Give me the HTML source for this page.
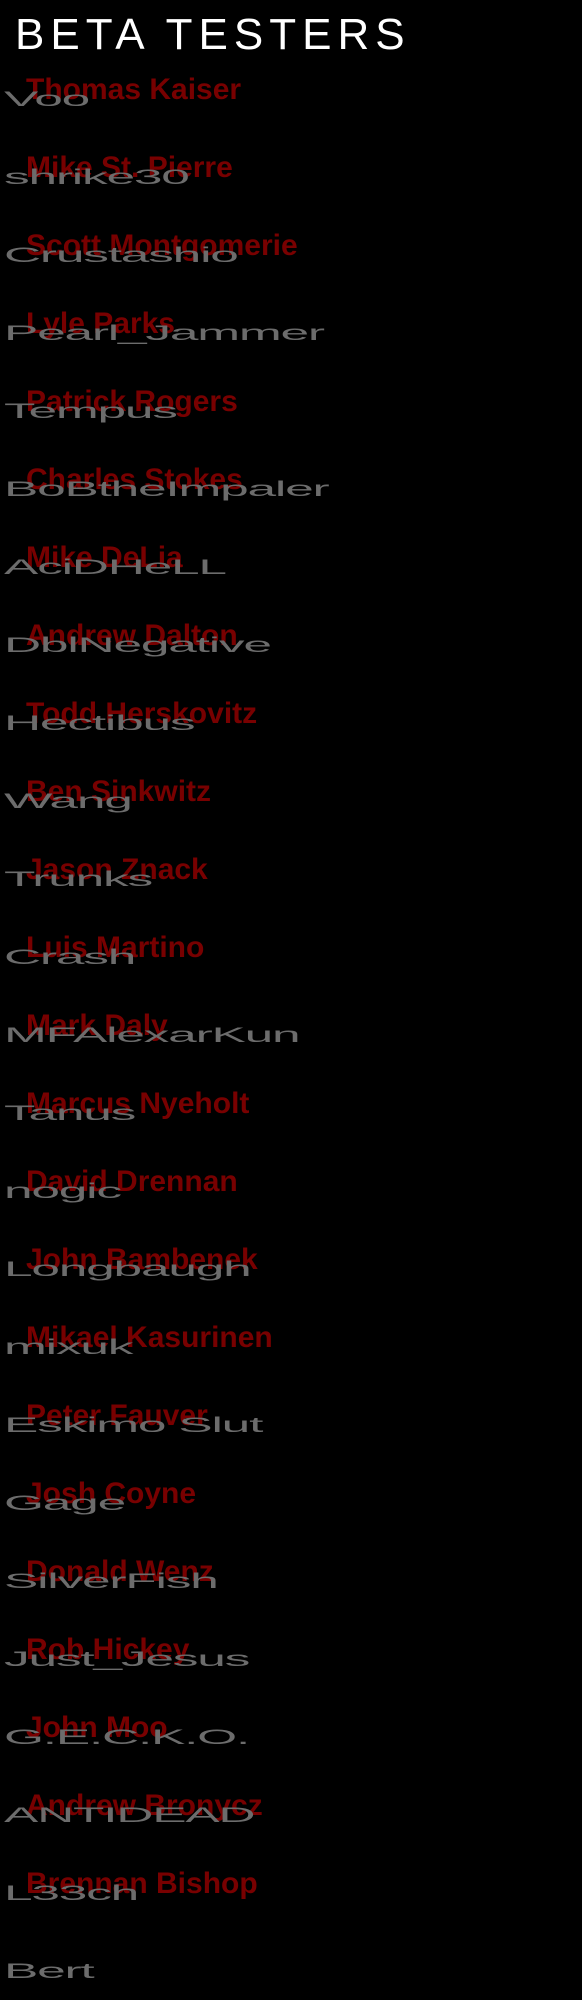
<!DOCTYPE html>
<html><head><meta charset="utf-8"><style>
html,body{margin:0;padding:0;background:#000;width:582px;height:2000px;overflow:hidden;position:relative}
.t{position:absolute;left:15px;top:13px;font:44px/44px "Liberation Sans",sans-serif;color:#fff;letter-spacing:6px;white-space:nowrap}
.r{position:absolute;left:26px;font:bold 30px/30px "Liberation Sans",sans-serif;color:#780000;white-space:nowrap;margin-top:0px}
.g{position:absolute;left:4px;font:21px/21px "Liberation Sans",sans-serif;color:#6c6c6c;white-space:nowrap;transform:scaleX(2.45);transform-origin:0 0;letter-spacing:-0.5px}
</style></head><body>
<div class="t">BETA TESTERS</div>
<div class="r" style="top:75px">Thomas Kaiser</div><div class="g" style="top:89px">Voo</div>
<div class="r" style="top:153px">Mike St. Pierre</div><div class="g" style="top:167px">shrike30</div>
<div class="r" style="top:231px">Scott Montgomerie</div><div class="g" style="top:245px">Crustashio</div>
<div class="r" style="top:309px">Lyle Parks</div><div class="g" style="top:323px">Pearl_Jammer</div>
<div class="r" style="top:387px">Patrick Rogers</div><div class="g" style="top:401px">Tempus</div>
<div class="r" style="top:465px">Charles Stokes</div><div class="g" style="top:479px">BoBtheImpaler</div>
<div class="r" style="top:543px">Mike DeLia</div><div class="g" style="top:557px">AciDHeLL</div>
<div class="r" style="top:621px">Andrew Dalton</div><div class="g" style="top:635px">DblNegative</div>
<div class="r" style="top:699px">Todd Herskovitz</div><div class="g" style="top:713px">Hectibus</div>
<div class="r" style="top:777px">Ben Sinkwitz</div><div class="g" style="top:791px">Wang</div>
<div class="r" style="top:855px">Jason Znack</div><div class="g" style="top:869px">Trunks</div>
<div class="r" style="top:933px">Luis Martino</div><div class="g" style="top:947px">Crash</div>
<div class="r" style="top:1011px">Mark Daly</div><div class="g" style="top:1025px">MFAlexarKun</div>
<div class="r" style="top:1089px">Marcus Nyeholt</div><div class="g" style="top:1103px">Tanus</div>
<div class="r" style="top:1167px">David Drennan</div><div class="g" style="top:1181px">nogic</div>
<div class="r" style="top:1245px">John Bambenek</div><div class="g" style="top:1259px">Longbaugh</div>
<div class="r" style="top:1323px">Mikael Kasurinen</div><div class="g" style="top:1337px">mixuk</div>
<div class="r" style="top:1401px">Peter Fauver</div><div class="g" style="top:1415px">Eskimo Slut</div>
<div class="r" style="top:1479px">Josh Coyne</div><div class="g" style="top:1493px">Gage</div>
<div class="r" style="top:1557px">Donald Wenz</div><div class="g" style="top:1571px">SilverFish</div>
<div class="r" style="top:1635px">Rob Hickey</div><div class="g" style="top:1649px">Just_Jesus</div>
<div class="r" style="top:1713px">John Moo</div><div class="g" style="top:1727px">G.E.C.K.O.</div>
<div class="r" style="top:1791px">Andrew Bronycz</div><div class="g" style="top:1805px">ANTIDEAD</div>
<div class="r" style="top:1869px">Brennan Bishop</div><div class="g" style="top:1883px">L33ch</div>
<div class="g" style="top:1961px">Bert</div>
</body></html>
